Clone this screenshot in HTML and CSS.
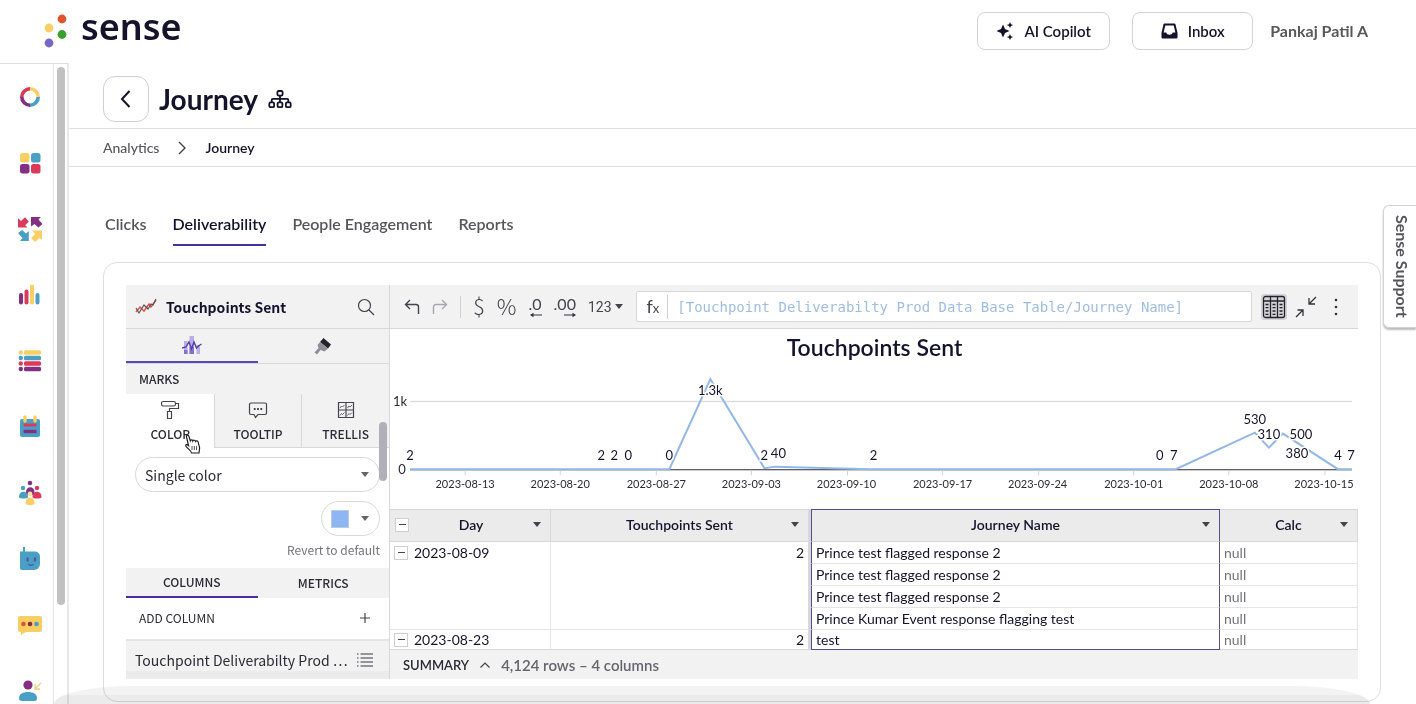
FILE: index.html
```html
<!DOCTYPE html>
<html lang="en">
<head>
<meta charset="utf-8">
<title>Sense - Journey analytics</title>
<link rel="stylesheet" href="styles.css">
</head>
<body>
<div class="app">
  <header class="topbar">
    <a class="logo" href="#">
      <svg width="24" height="34" viewBox="0 0 24 34" aria-hidden="true"><circle cx="18" cy="5" r="4.4" fill="#e0532f"/><circle cx="5" cy="14" r="4.4" fill="#f8cf63"/><circle cx="18" cy="20.500" r="4.400" fill="#38a12b"/><circle cx="5" cy="29" r="4.400" fill="#7668c9"/></svg>
      <span class="logo-name">sense</span>
    </a>
    <div class="top-actions">
      <button class="top-btn top-btn-wide"><svg width="18" height="18" viewBox="0 0 18 18" fill="#15132b"><path d="M7 2.500l2 4.500L13.500 9 9 11l-2 4.500L5 11 .5 9 5 7zM14 0l1 2.200L17.200 3l-2.200 1L14 6l-1-2-2.200-1L13 2.200zM14 12l1 2.200 2.200.8-2.200 1L14 18l-1-2-2.200-1 2.200-.8z"/></svg>AI Copilot</button>
      <button class="top-btn"><svg width="17" height="16" viewBox="0 0 17 16"><path d="M3.500 1.500h10l2 8.500v4.500h-14V10z" fill="none" stroke="#15132b" stroke-width="2" stroke-linejoin="round"/><path d="M1 9.500h4.300c.5 3 5.900 3 6.400 0H16V15H1z" fill="#15132b"/></svg>Inbox</button>
    </div>
    <span class="user">Pankaj Patil A</span>
  </header>

  <div class="shell">
    <aside class="sidebar">
      <nav class="side-nav" aria-label="Main">
        <a href="#" aria-label="Home"><svg viewBox="0 0 26 26" fill="none" stroke-width="3.600"><path d="M13 4.800A8.200 8.200 0 0 0 4.800 13" stroke="#d93856"/><path d="M13 4.800A8.200 8.200 0 0 1 21.200 13" stroke="#f8cf63"/><path d="M21.200 13A8.200 8.200 0 0 1 13 21.200" stroke="#4a9fc4"/><path d="M13 21.200A8.200 8.200 0 0 1 4.800 13" stroke="#822f84"/></svg></a>
        <a href="#" aria-label="Apps"><svg viewBox="0 0 26 26"><rect x="3" y="3" width="9.500" height="9.500" rx="2.500" fill="#f8cf63"/><rect x="14" y="3" width="9.500" height="9.500" rx="2.500" fill="#4a9fc4"/><rect x="3" y="14" width="9.500" height="9.500" rx="2.500" fill="#822f84"/><rect x="14" y="14" width="9.500" height="9.500" rx="2.500" fill="#dc3a5a"/></svg></a>
        <a href="#" aria-label="Journeys"><svg viewBox="0 0 26 26"><path d="M1 2v9.500h9.500L8.200 9.300 11.800 5.500 8 1.200 4 5z" fill="#dc3a5a"/><path d="M14 1h9.800L21.500 3.500 25.500 8 21.500 11.500 17.500 8 14 10.500z" fill="#822f84"/><path d="M1 17L5 14l4 3.500 2.800-2.500V25H3l2.500-3z" fill="#4a9fc4"/><path d="M15 14.500h10V24l-2.500-2-4.500 4-3.800-4 4-4z" fill="#f8cf63"/></svg></a>
        <a href="#" aria-label="Analytics"><svg viewBox="0 0 26 26" stroke-width="4" stroke-linecap="round"><path d="M4 13v7.500" stroke="#822f84"/><path d="M9.500 9.500v11" stroke="#dc3a5a"/><path d="M15 4.500v16" stroke="#f8cf63"/><path d="M20.500 13v7.500" stroke="#4a9fc4"/></svg></a>
        <a href="#" aria-label="Lists"><svg viewBox="0 0 26 26"><g fill="#f8cf63"><circle cx="3.800" cy="4.500" r="2.200"/><rect x="7" y="2.300" width="17" height="4.400" rx="1.500"/></g><g fill="#4a9fc4"><circle cx="3.800" cy="10" r="2.200"/><rect x="7" y="7.800" width="17" height="4.400" rx="1.500"/></g><g fill="#dc3a5a"><circle cx="3.800" cy="15.500" r="2.200"/><rect x="7" y="13.300" width="17" height="4.400" rx="1.500"/></g><g fill="#822f84"><circle cx="3.800" cy="21" r="2.200"/><rect x="7" y="18.800" width="17" height="4.400" rx="1.500"/></g></svg></a>
        <a href="#" aria-label="Calendar"><svg viewBox="0 0 26 26"><rect x="3" y="5" width="20" height="18" rx="2" fill="#4a9fc4"/><path d="M8 3v4M18 3v4" stroke="#f8cf63" stroke-width="3.400" stroke-linecap="round"/><path d="M6.500 11h13" stroke="#dc3a5a" stroke-width="3"/><path d="M6.500 17.500h13" stroke="#822f84" stroke-width="3.400"/></svg></a>
        <a href="#" aria-label="People"><svg viewBox="0 0 26 26"><circle cx="13" cy="3" r="2.300" fill="#822f84"/><path d="M9 12c0-6.500 8.500-6.500 8.500 0v3H9z" fill="#822f84"/><circle cx="6" cy="8" r="2.200" fill="#4a9fc4"/><path d="M2 17c0-7 9-7 9 0 0 2-9 2-9 0z" fill="#4a9fc4"/><circle cx="20" cy="8" r="2.200" fill="#dc3a5a"/><path d="M15.500 17c0-7 9-7 9 0 0 2-9 2-9 0z" fill="#dc3a5a"/><circle cx="13" cy="14" r="2.400" fill="#f8e3a5"/><path d="M8.500 23c0-7.500 9-7.500 9 0 0 3-9 3-9 0z" fill="#f8cf63"/></svg></a>
        <a href="#" aria-label="Bot"><svg viewBox="0 0 26 26"><path d="M7 1v6" stroke="#4a9fc4" stroke-width="2"/><path d="M3 5.500h15a5 5 0 0 1 5 5V18a6 6 0 0 1-6 6H5a2 2 0 0 1-2-2z" fill="#4a9fc4"/><path d="M10.500 11.500v4M18 11.500v4" stroke="#5157a0" stroke-width="2.200"/><path d="M11.500 18c1 1.700 4 1.700 5 0" fill="none" stroke="#5157a0" stroke-width="1.400"/></svg></a>
        <a href="#" aria-label="Messages"><svg viewBox="0 0 26 26"><path d="M3 4h20a2 2 0 0 1 2 2v12a2 2 0 0 1-2 2H9l-5 3v-3H3a2 2 0 0 1-2-2V6a2 2 0 0 1 2-2z" fill="#f8cf63"/><circle cx="6.500" cy="12" r="2.300" fill="#e0532f"/><circle cx="13" cy="12" r="2.300" fill="#822f3f"/><circle cx="19.500" cy="12" r="2.300" fill="#4a9fc4"/></svg></a>
        <a href="#" aria-label="Profile"><svg viewBox="0 0 26 26"><circle cx="11" cy="7" r="4.600" fill="#822f84"/><path d="M2 20c0-4 4-6 9-6s9 2 9 6c0 3-2 3-3 3H5c-2 0-3-.8-3-3z" fill="#4a9fc4"/><path d="M24 5l-6 6M18 6v5h5" fill="none" stroke="#f0cf7a" stroke-width="1.300"/></svg></a>
      </nav>
      <div class="side-scroll"><div class="side-thumb"></div></div>
    </aside>

    <main class="main">
      <div class="page-head">
        <button class="back" aria-label="Back"><svg width="14" height="18" viewBox="0 0 14 18"><path d="M10.500 1L3 9l7.500 8" fill="none" stroke="#15132b" stroke-width="2"/></svg></button>
        <h1>Journey</h1>
        <svg width="24" height="20" viewBox="0 0 24 20" fill="none" stroke="#15132b" stroke-width="1.800"><rect x="9.400" y="2" width="5.200" height="4.600" rx="1.300"/><rect x="1.300" y="13.400" width="4.800" height="4.800" rx="1.300"/><rect x="9.600" y="13.400" width="4.800" height="4.800" rx="1.300"/><rect x="17.900" y="13.400" width="4.800" height="4.800" rx="1.300"/><path d="M12 6.600v6.800M3.700 13.400V11c0-.7.500-1.200 1.200-1.200h14.200c.7 0 1.200.5 1.200 1.200v2.400"/></svg>
      </div>
      <nav class="crumbs" aria-label="Breadcrumb">
        <a href="#">Analytics</a>
        <svg width="8" height="14" viewBox="0 0 8 14"><path d="M1 1l6 6-6 6" fill="none" stroke="#444" stroke-width="1.400"/></svg>
        <span class="crumb-now">Journey</span>
      </nav>

      <nav class="tabs" aria-label="Reports">
        <a href="#">Clicks</a>
        <a href="#" class="tab-on">Deliverability</a>
        <a href="#">People Engagement</a>
        <a href="#">Reports</a>
      </nav>

      <section class="card">
        <div class="workbook">
          <div class="panel">
            <div class="panel-head">
              <svg width="22" height="18" viewBox="0 0 22 18" fill="none"><path d="M1 14l4-5 4 4 5-7 2 3 5-7" stroke="#e2543f" stroke-width="1.500"/><path d="M1 10l3 5 5-8 4 4 3-5 2 1 3-6" stroke="#555062" stroke-width="1.100"/></svg>
              <h2>Touchpoints Sent</h2>
              <button class="icon-btn" aria-label="Search"><svg width="18" height="18" viewBox="0 0 18 18" fill="none" stroke="#44434d" stroke-width="1.200"><circle cx="7.500" cy="7.500" r="6"/><path d="M12 12l5 5"/></svg></button>
            </div>
            <div class="mode-tabs">
              <button class="mode-on" aria-label="Chart"><svg width="20" height="20" viewBox="0 0 20 20"><path d="M2 6h3.500v13H2zM7.500 1H12v18H7.500zM14.500 10H18v9h-3.500z" fill="#b9ade3"/><path d="M2 15h3.500v4H2zM7.500 12H12v7H7.500z" fill="#8273cf"/><path d="M0 13l4-1 3-5 2.500 7L12 7l2.500 6 2-2 3-2" fill="none" stroke="#523fa8" stroke-width="1.400"/></svg></button>
              <button aria-label="Format"><svg width="18" height="18" viewBox="0 0 18 18"><path d="M9.500 1l7.500 6.500-3 4L6 5z" fill="#24232c"/><path d="M6 5l8 6.500-3.500 3-4-1.500L3 17.500.5 15.500 4.500 11 3.500 8z" fill="#8f8e99"/></svg></button>
            </div>
            <h3>MARKS</h3>
            <div class="mark-tabs">
              <button class="mark-on"><svg width="20" height="20" viewBox="0 0 20 20" fill="none" stroke="#44434d" stroke-width="1.200"><rect x="1.500" y="1.500" width="14" height="4.500" rx="1.800"/><path d="M15.500 3.500h3v5H9.500v3M7.500 11.500h4v7h-4z"/></svg>COLOR</button>
              <button><svg width="20" height="20" viewBox="0 0 20 20" fill="none" stroke="#44434d" stroke-width="1.200"><path d="M3 3h14a1.500 1.500 0 0 1 1.500 1.500V13a1.500 1.500 0 0 1-1.500 1.500H10L7.500 17.500 6 14.500H3A1.500 1.500 0 0 1 1.500 13V4.500A1.500 1.500 0 0 1 3 3z"/><path d="M5.800 9h1.800M9.100 9h1.800M12.400 9h1.800" stroke-width="1.800"/></svg>TOOLTIP</button>
              <button><svg width="18" height="20" viewBox="0 0 18 20" fill="none" stroke="#44434d" stroke-width="1.200"><path d="M1.500 2.500h15v15h-15zM9 2.500v15M1.500 10h15"/><path d="M3 8l1.500-2 1 1L7.500 5M10.500 8L12 6l1 1 2-2M3 15.500l1.500-2 1 1 2-2M10.500 15.500l1.500-2 1 1 2-2" stroke-width=".8"/></svg>TRELLIS</button>
            </div>
            <div class="mark-body">
              <div class="select-wrap">
                <select aria-label="Color mode"><option>Single color</option></select>
                <i class="caret"></i>
              </div>
              <button class="swatch-btn" aria-label="Pick color"><span class="swatch"></span><i class="caret"></i></button>
              <button class="revert">Revert to default</button>
            </div>
            <div class="col-tabs"><button class="col-on">COLUMNS</button><button>METRICS</button></div>
            <button class="add-col">ADD COLUMN<svg width="10" height="10" viewBox="0 0 10 10"><path d="M5 0v10M0 5h10" stroke="#44434d" stroke-width="1.200"/></svg></button>
            <div class="col-item"><span>Touchpoint Deliverabilty Prod …</span><svg width="16" height="14" viewBox="0 0 16 14" stroke="#77767f" stroke-width="1.300"><path d="M0 1h1.500M3.500 1H16M0 5h1.500M3.500 5H16M0 9h1.500M3.500 9H16M0 13h1.500M3.500 13H16"/></svg></div>
            <div class="panel-thumb"></div>
            <svg class="cursor" width="18" height="20" viewBox="0 0 18 20"><path d="M4.500 11.500L2.500 3C2 1 4.500.5 5 2.500l1.300 4.300c.5-1.500 2.300-1 2.500.2.600-1.300 2.400-.9 2.700.4.700-1 2.200-.6 2.600.8l1.400 5c.4 2-.5 3-.5 5.800H7.500c0-2-3.500-4-5.500-6.700-1-1.700.8-2.500 2.500-.8z" fill="#fff" stroke="#222" stroke-width="1.200"/><path d="M8 12v4M10.300 12v4M12.600 12v4" stroke="#555"/></svg>
          </div>

          <div class="stage">
            <div class="toolbar">
              <div class="tools">
                <button aria-label="Undo"><svg width="16" height="16" viewBox="0 0 16 16" fill="none" stroke="#44434d" stroke-width="1.400"><path d="M6 1L1.500 5.500 6 10M1.500 5.500H12a2.500 2.500 0 0 1 2.500 2.500v7"/></svg></button>
                <button aria-label="Redo"><svg width="16" height="16" viewBox="0 0 16 16" fill="none" stroke="#a8a7ae" stroke-width="1.400"><path d="M10 1l4.500 4.500L10 10M14.500 5.500H4A2.500 2.500 0 0 0 1.500 8v7"/></svg></button>
                <span class="sep"></span>
                <button class="glyph">$</button>
                <button class="glyph">%</button>
                <button class="decimals">.0<svg width="12" height="6" viewBox="0 0 12 6"><path d="M12 3H1" stroke="#33323c"/><path d="M0 3l3.500-2.300v4.600z" fill="#33323c"/></svg></button>
                <button class="decimals">.00<svg width="12" height="6" viewBox="0 0 12 6"><path d="M0 3h11" stroke="#33323c"/><path d="M12 3L8.500.7v4.600z" fill="#33323c"/></svg></button>
                <button class="number">123<i class="caret"></i></button>
              </div>
              <label class="formula"><span class="fx">f<small>x</small></span><input type="text" value="[Touchpoint Deliverabilty Prod Data Base Table/Journey Name]"></label>
              <div class="view-tools">
                <button class="grid-on" aria-label="Show table"><svg width="24" height="24" viewBox="0 0 24 24" fill="none" stroke="#24232c" stroke-width="1.300"><rect x="1.500" y="1.500" width="21" height="21" rx="2"/><path d="M1.500 6h21M8.500 1.500v21M15.500 1.500v21"/><path d="M3.500 9.500h3M3.500 12.700h3M3.500 16h3M3.500 19.300h3M10.500 9.500h3M10.500 12.700h3M10.500 16h3M10.500 19.300h3M17.500 9.500h3M17.500 12.700h3M17.500 16h3M17.500 19.300h3"/></svg></button>
                <button aria-label="Collapse"><svg width="22" height="22" viewBox="0 0 22 22" fill="none" stroke="#33323c" stroke-width="1.300"><path d="M21 1l-7 7M14 2v6h6M1 21l7-7M2.500 14H8v6"/></svg></button>
                <button class="more" aria-label="More"><svg width="4" height="18" viewBox="0 0 4 18" fill="#33323c"><circle cx="2" cy="2" r="1.300"/><circle cx="2" cy="9" r="1.300"/><circle cx="2" cy="16" r="1.300"/></svg></button>
              </div>
            </div>

            <svg class="chart" viewBox="0 0 967 180" role="img" aria-label="Touchpoints Sent by day">
              <text class="chart-title" x="484" y="27">Touchpoints Sent</text>
              <path d="M20 72.500H961" stroke="#dddddf" stroke-width="1.500"/>
              <path d="M20 140.500H961" stroke="#2c2b36"/>
              <path d="M75 141v5M170 141v5M266 141v5M361 141v5M457 141v5M552 141v5M648 141v5M743 141v5M838 141v5M934 141v5" stroke="#ccd3e2"/>
              <path d="M20 140H279L320 50 374 139 385 137.500 480 140H785L864 103.500 878 118.500 892 104.500 947 140H961" fill="none" stroke="#93b7e6" stroke-width="2"/>
              <g class="axis"><text x="10" y="77">1k</text><text x="12" y="145">0</text></g>
              <g class="dates"><text x="75" y="159">2023-08-13</text><text x="170" y="159">2023-08-20</text><text x="266" y="159">2023-08-27</text><text x="361" y="159">2023-09-03</text><text x="456" y="159">2023-09-10</text><text x="552" y="159">2023-09-17</text><text x="647" y="159">2023-09-24</text><text x="743" y="159">2023-10-01</text><text x="838" y="159">2023-10-08</text><text x="933" y="159">2023-10-15</text></g>
              <g class="values"><text x="20" y="131">2</text><text x="211" y="131">2</text><text x="224" y="131">2</text><text x="238" y="131">0</text><text x="279" y="131">0</text><text x="320" y="66">1.3k</text><text x="374" y="131">2</text><text x="388" y="129">40</text><text x="483" y="131">2</text><text x="769" y="131">0</text><text x="783" y="131">7</text><text x="864" y="95">530</text><text x="878" y="110">310</text><text x="910" y="110">500</text><text x="906" y="129">380</text><text x="947" y="131">4</text><text x="960" y="131">7</text></g>
            </svg>

            <table class="data">
              <colgroup><col class="c-day"><col class="c-sent"><col class="c-name"><col class="c-calc"></colgroup>
              <thead><tr>
                <th><div class="th"><button class="fold" aria-label="Collapse all"></button><span>Day</span><i class="caret"></i></div></th>
                <th class="sent"><div class="th"><span>Touchpoints Sent</span><i class="caret"></i></div></th>
                <th class="name"><div class="th"><span>Journey Name</span><i class="caret"></i></div></th>
                <th><div class="th"><span>Calc</span><i class="caret"></i></div></th>
              </tr></thead>
              <tbody>
                <tr><td rowspan="4"><div class="day"><button class="fold" aria-label="Collapse"></button>2023-08-09</div></td><td rowspan="4" class="sent">2</td><td class="name">Prince test flagged response 2</td><td class="null">null</td></tr>
                <tr><td class="name">Prince test flagged response 2</td><td class="null">null</td></tr>
                <tr><td class="name">Prince test flagged response 2</td><td class="null">null</td></tr>
                <tr><td class="name">Prince Kumar Event response flagging test</td><td class="null">null</td></tr>
                <tr class="last"><td><div class="day"><button class="fold" aria-label="Collapse"></button>2023-08-23</div></td><td class="sent">2</td><td class="name">test</td><td class="null">null</td></tr>
              </tbody>
            </table>

            <div class="summary"><button>SUMMARY<svg width="10" height="6" viewBox="0 0 10 6"><path d="M.5 5.500L5 1l4.500 4.500" fill="none" stroke="#44434d" stroke-width="1.200"/></svg></button><span>4,124 rows – 4 columns</span></div>
          </div>
        </div>
      </section>
    </main>
  </div>
  <button class="support">Sense Support</button>
  <div class="haze"></div>
</div>
</body>
</html>
```
FILE: styles.css
```css
* { box-sizing: border-box; }
body { margin: 0; background: #fff; color: #15132b; font-family: Lato, "Open Sans", sans-serif; font-size: 14px; }
button { margin: 0; padding: 0; border: 0; background: none; color: inherit; font: inherit; cursor: pointer; }
a { color: inherit; text-decoration: none; }
h1, h2, h3 { margin: 0; }
svg { display: block; flex: none; }

.app { position: relative; display: flex; flex-direction: column; height: 100vh; overflow: hidden; }
.topbar { display: flex; flex: none; align-items: center; height: 63px; padding: 0 48px 2px 44px; }
.logo { display: flex; align-items: center; gap: 13px; margin-right: auto; }
.logo-name { font: 600 36px/44px "Noto Sans", sans-serif; padding-bottom: 8px; }
.top-actions { display: flex; gap: 22px; }
.top-btn { display: flex; align-items: center; justify-content: center; gap: 10px; min-width: 121px; height: 38px; border: 1px solid #d3d3d6; border-radius: 8px; font-size: 15px; font-weight: 600; }
.top-btn-wide { min-width: 133px; }
.user { margin-left: 17px; color: #58585c; font-size: 16px; font-weight: 700; }

.shell { display: flex; flex: 1; min-height: 0; }
.sidebar { display: flex; flex: none; width: 69px; border-top: 1px solid #dedede; border-right: 2px solid #e8e8e8; overflow: hidden; }
.side-nav { width: 53px; padding-left: 6px; }
.side-nav a { display: flex; align-items: center; justify-content: center; height: 66px; }
.side-nav svg { width: 26px; height: 26px; }
.side-scroll { flex: 1; padding: 3px 2px 0 3px; border-left: 1px solid #e3e3e3; }
.side-thumb { height: calc(100% - 99px); border-radius: 4px; background: #c1c1c1; }

.main { flex: 1; min-width: 0; }
.page-head { display: flex; align-items: center; gap: 10px; height: 66px; padding: 7px 34px 0; border-bottom: 1px solid #dedede; }
.back { display: grid; place-items: center; width: 46px; height: 46px; border: 1px solid #d0d0d3; border-radius: 12px; }
h1 { font-size: 28px; font-weight: 700; }
.crumbs { display: flex; align-items: center; gap: 19px; height: 38px; padding: 0 34px; border-bottom: 1px solid #dedede; color: #55555c; font-weight: 500; }
.crumb-now { color: #15132b; font-weight: 600; }
.tabs { display: flex; gap: 26px; margin: 47px 36px 16px; color: #55555c; font-size: 16px; font-weight: 600; line-height: 20px; }
.tabs a { padding-bottom: 10px; border-bottom: 2px solid transparent; }
.tabs .tab-on { border-color: #4a2fa3; color: #15132b; }

.card { margin: 0 35px 0 34px; padding: 22px; border: 1px solid #dedede; border-radius: 14px; }
.workbook { display: flex; }

.panel { position: relative; flex: none; width: 264px; border-right: 1px solid #d8d8da; color: #2b2a35; font-family: "Noto Sans CJK SC", sans-serif; }
.panel-head { display: flex; align-items: center; gap: 9px; height: 44px; padding: 0 14px 0 9px; border-bottom: 1px solid #d8d8da; background: #f2f2f3; }
h2 { flex: 1; color: #15132b; font-size: 14px; font-weight: 700; }
.mode-tabs { display: grid; grid-template-columns: 1fr 1fr; height: 35px; border-bottom: 1px solid #d8d8da; background: #f2f2f3; }
.mode-tabs button { display: grid; place-items: center; }
.mode-tabs .mode-on { border-bottom: 2px solid #5b46b0; }
h3 { padding-left: 13px; background: #f2f2f3; font-size: 12px; font-weight: 500; line-height: 30px; }
.mark-tabs { display: grid; grid-template-columns: repeat(3, 1fr); height: 54px; }
.mark-tabs button { display: flex; flex-direction: column; align-items: center; gap: 6px; padding-top: 6px; border-left: 1px solid #d8d8da; border-bottom: 1px solid #d8d8da; background: #f2f2f3; font-size: 12px; font-weight: 500; line-height: 16px; }
.mark-tabs .mark-on { border-color: transparent; background: #fff; }
.mark-body { display: flex; flex-direction: column; align-items: flex-end; padding: 9px 9px 9px 9px; }
.caret { flex: none; width: 0; height: 0; border: 4px solid transparent; border-top: 5px solid currentColor; border-bottom: 0; }
.select-wrap { position: relative; width: 100%; }
.select-wrap .caret { position: absolute; top: 15px; right: 11px; color: #66656e; }
select { display: block; width: 100%; height: 35px; padding: 0 9px; border: 1px solid #d8d8da; border-radius: 18px; background: #fff; color: #2b2a35; font: 14px "Noto Sans CJK SC", sans-serif; appearance: none; }
.swatch-btn { display: flex; align-items: center; gap: 12px; height: 35px; margin-top: 9px; padding: 0 10px 0 9px; border: 1px solid #d8d8da; border-radius: 18px; color: #66656e; }
.swatch { width: 18px; height: 18px; border: 1px solid #b9cbe8; background: #8db6f3; }
.revert { margin-top: 4px; color: #74737c; font-size: 12px; line-height: 19px; }
.col-tabs { display: grid; grid-template-columns: 1fr 1fr; height: 30px; background: #f2f2f3; font-size: 12px; font-weight: 500; line-height: 18px; }
.col-tabs .col-on { border-bottom: 2px solid #4a2fa3; }
.add-col { display: flex; align-items: center; justify-content: space-between; width: 100%; height: 43px; padding: 0 19px 2px 13px; border-bottom: 2px solid #e4e4e5; font-size: 12px; }
.col-item { display: flex; align-items: center; justify-content: space-between; height: 38px; padding: 0 16px 0 9px; background: linear-gradient(#f2f2f3 30px, #ebebec 30px); font-size: 14px; white-space: nowrap; }
.panel-thumb { position: absolute; top: 137px; right: 2px; width: 8px; height: 59px; border-radius: 4px; background: #b1b0b9; }
.cursor { position: absolute; top: 149px; left: 58px; }

.stage { flex: 1; min-width: 0; }
.toolbar { display: flex; align-items: center; height: 44px; padding: 0 11px 0 14px; border-bottom: 1px solid #d8d8da; background: #f2f2f3; }
.tools { display: flex; align-items: center; gap: 12px; margin-right: 13px; color: #44434d; }
.sep { width: 1px; height: 22px; background: #d0d0d3; }
.glyph { padding-bottom: 4px; font-family: "Noto Sans CJK SC", sans-serif; font-size: 22px; font-weight: 300; line-height: 26px; }
.decimals { display: flex; flex-direction: column; align-items: flex-end; font-size: 16px; line-height: 16px; }
.number { display: flex; align-items: center; gap: 3px; font-family: Roboto, sans-serif; }
.formula { display: flex; flex: 1; align-items: center; min-width: 0; height: 31px; border: 1px solid #d8d8da; border-radius: 2px; background: #fff; }
.fx { padding: 0 8px 0 10px; border-right: 1px solid #d0d0d3; color: #44434d; font-size: 18px; line-height: 22px; }
.fx small { font-size: 13px; }
.formula input { flex: 1; min-width: 0; padding: 0 9px; border: 0; background: none; color: #9fbde2; font: 14px "DejaVu Sans Mono", monospace; }
.view-tools { display: flex; align-items: center; gap: 8px; margin-left: 9px; }
.grid-on { padding: 1px; border-radius: 3px; background: #d3d3d8; }
.more { width: 22px; display: grid; place-items: center; }

.chart { width: 100%; height: auto; font-size: 13px; fill: #2b2a35; text-anchor: middle; }
.chart-title { font-size: 23px; font-weight: 600; fill: #15132b; }
.dates { font-size: 11px; }
.values { stroke: #fff; stroke-width: 3px; paint-order: stroke; fill: #15132b; }

.data { width: 100%; border-spacing: 0; table-layout: fixed; }
.c-day { width: 161px; }
.c-sent { width: 260px; }
.c-calc { width: 138px; }
.data th { height: 33px; padding: 0 9px 2px 5px; border: 0 solid #d8d8da; border-width: 1px 1px 1px 0; background: #ebebec; font-weight: 600; }
.th { display: flex; align-items: center; }
.th span { flex: 1; }
.th span:first-child { padding-left: 12px; }
.th .caret { color: #44434d; }
.data td { height: 22px; padding: 0 4px; border: 0 solid #e4e4e6; border-width: 0 1px 1px 0; line-height: 21px; vertical-align: top; }
.data .sent { border-right: 3px solid #d8d8da; }
.data td.sent { text-align: right; }
.data .name { border-left: 1px solid #5a4a8f; border-right: 1px solid #5a4a8f; }
.data th.name { border-top-color: #5a4a8f; }
.data .null { color: #74737c; }
.data .last td { height: 20px; border-bottom-color: #d8d8da; line-height: 19px; }
.data .last .name { border-bottom-color: #5a4a8f; }
.day { display: flex; align-items: center; gap: 6px; }
.fold { display: grid; flex: none; place-items: center; width: 14px; height: 14px; border: 1px solid #cfcfd2; background: #fff; }
.fold::before { content: ""; width: 7px; height: 1px; background: #44434d; }
.summary { display: flex; align-items: center; gap: 11px; height: 29px; padding-left: 13px; background: #f2f2f3; color: #66656e; font-size: 15px; font-weight: 600; }
.summary button { display: flex; align-items: center; gap: 11px; color: #2b2a35; font-size: 13px; font-weight: 600; }

.support { position: absolute; top: 205px; right: 0; width: 33px; height: 123px; padding-left: 5px; border: 1px solid #d3d3d6; border-right: 0; border-radius: 6px 0 0 6px; background: #fff; box-shadow: 0 2px 2px #bbb; color: #55555c; font-size: 16px; font-weight: 700; writing-mode: vertical-rl; }
.haze { position: absolute; right: 46px; bottom: 0; left: 54px; height: 18px; border-radius: 80px 80px 0 0 / 18px 18px 0 0; background: linear-gradient(#f3f3f3 50%, #ebebeb 50%); mix-blend-mode: multiply; pointer-events: none; }
```
